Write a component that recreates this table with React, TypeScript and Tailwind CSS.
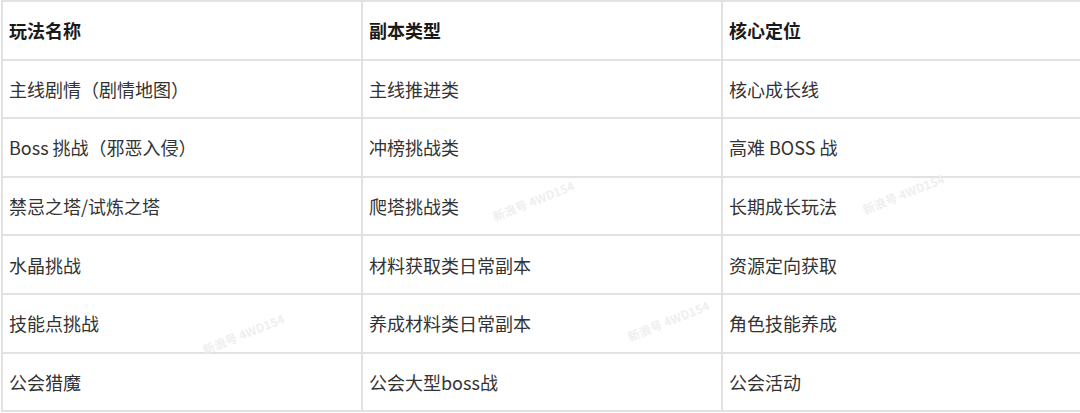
import { FC } from "react";

const header = ["玩法名称", "副本类型", "核心定位"];

const rows: string[][] = [
  ["主线剧情（剧情地图）", "主线推进类", "核心成长线"],
  ["Boss 挑战（邪恶入侵）", "冲榜挑战类", "高难 BOSS 战"],
  ["禁忌之塔/试炼之塔", "爬塔挑战类", "长期成长玩法"],
  ["水晶挑战", "材料获取类日常副本", "资源定向获取"],
  ["技能点挑战", "养成材料类日常副本", "角色技能养成"],
  ["公会猎魔", "公会大型boss战", "公会活动"],
];

const Cell: FC<{ text: string; head?: boolean }> = ({ text, head }) => (
  <div
    className={
      "flex items-center h-[58.6px] pl-[6px] border-b-2 border-l-2 border-[#e2e2e2] " +
      (head ? "font-bold text-[#1a1a1a]" : "text-[#333333]")
    }
  >
    {text}
  </div>
);

const Mark: FC<{ className: string }> = ({ className }) => (
  <div
    className={
      "absolute text-[12px] font-bold text-[#efefef] -rotate-[22deg] pointer-events-none whitespace-nowrap " +
      className
    }
  >
    新浪号 4WD154
  </div>
);

export default function App() {
  return (
    <div
      className="relative w-[1080px] h-[413px] overflow-hidden bg-white"
      style={{ fontFamily: '"Noto Sans CJK SC", "Noto Sans", sans-serif' }}
    >
      <div className="ml-[1px] w-[1084px] border-t-2 border-[#e2e2e2] text-[18px] leading-none grid grid-cols-[360px_360px_360px]">
        {header.map((h) => (
          <Cell key={h} text={h} head />
        ))}
        {rows.map((r) =>
          r.map((c, i) => <Cell key={r[0] + i} text={c} />)
        )}
      </div>
      <Mark className="left-[490px] top-[192px]" />
      <Mark className="left-[860px] top-[185px]" />
      <Mark className="left-[200px] top-[325px]" />
      <Mark className="left-[625px] top-[312px]" />
    </div>
  );
}
